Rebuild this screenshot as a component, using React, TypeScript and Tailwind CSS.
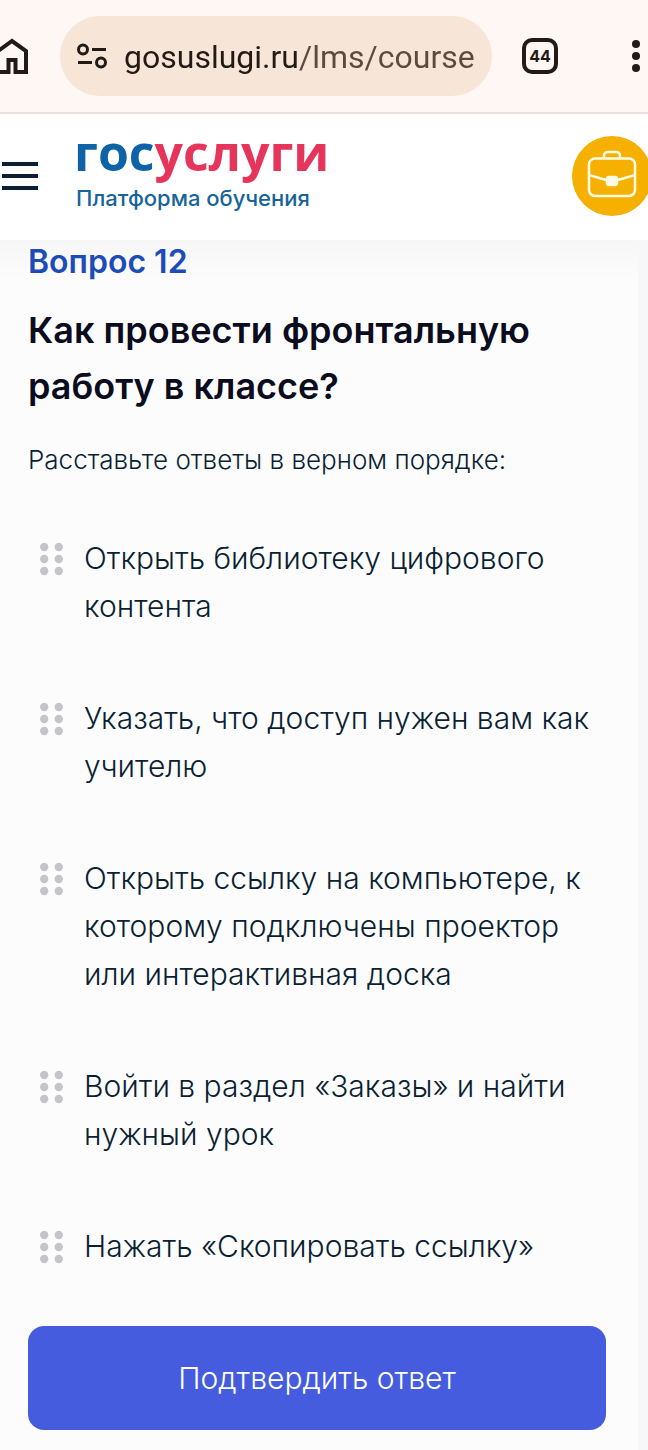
const answers = [
  "Открыть библиотеку цифрового контента",
  "Указать, что доступ нужен вам как учителю",
  "Открыть ссылку на компьютере, к которому подключены проектор или интерактивная доска",
  "Войти в раздел «Заказы» и найти нужный урок",
  "Нажать «Скопировать ссылку»",
];

export default function App() {
  return (
    <div className="min-h-screen overflow-x-hidden bg-[#f7f7f9] font-['Inter',sans-serif]">
      <BrowserBar />
      <SiteHeader />
      <main className="mr-2.5 bg-[#fcfcfc] bg-linear-to-b from-[#f6f6f6] to-[#fcfcfc] to-[40px] pb-5 pl-7 pr-8 pt-0.5">
        <h2 className="text-[32px] font-semibold leading-10 text-[#1d4cb8]">Вопрос 12</h2>
        <h1 className="mt-5 text-[36px] font-semibold leading-14 text-[#0b0c1e]">
          Как провести фронтальную работу в классе?
        </h1>
        <p className="mt-6 text-[26px] font-light leading-11 text-[#0b1f33]">
          Расставьте ответы в верном порядке:
        </p>
        <ol className="mt-13 flex flex-col gap-16">
          {answers.map((text) => (
            <Answer key={text} text={text} />
          ))}
        </ol>
        <button
          type="button"
          className="mt-14 h-26 w-full rounded-2xl bg-[#445cdd] text-[30px] font-light text-white"
        >
          Подтвердить ответ
        </button>
      </main>
    </div>
  );
}

function BrowserBar() {
  return (
    <div className="flex h-[114px] items-center border-b-2 border-[#ecdfdb] bg-[#fff7f4] text-[#231a15]">
      <button type="button" aria-label="Домой" className="w-7 shrink-0">
        <svg viewBox="0 0 28 36" className="h-9 w-7" fill="none" stroke="currentColor" strokeWidth="4">
          <path d="M-4 14.500 12 3 26 13V34H15.500V22H8.500V34H-3V14" />
        </svg>
      </button>
      <div className="ml-8 flex h-20 min-w-0 flex-1 items-center rounded-full bg-[#f7e5d8] pl-4 pr-4">
        <svg viewBox="0 0 32 28" className="h-7 w-8 shrink-0" fill="none" stroke="currentColor" strokeWidth="3">
          <circle cx="7" cy="7.500" r="4.500" />
          <path d="M16 7.500h14M2 20.500h14" />
          <circle cx="25" cy="20.500" r="4.500" />
        </svg>
        <input
          type="text"
          aria-label="Адрес страницы"
          defaultValue="gosuslugi.ru/lms/courses"
          className="ml-4 h-13 min-w-0 flex-1 bg-linear-to-r from-[#231a15] from-[176px] to-[#5c4a40] to-[176px] bg-clip-text pt-0.5 font-['Roboto',sans-serif] text-[32px] text-transparent outline-none"
        />
      </div>
      <button
        type="button"
        aria-label="Вкладки"
        className="ml-[30px] flex size-9 shrink-0 items-center justify-center rounded-[10px] border-4 border-current text-base font-bold"
      >
        44
      </button>
      <button type="button" aria-label="Меню" className="ml-[72px] w-[18px] shrink-0">
        <svg viewBox="0 0 18 36" className="h-9 w-[18px]" fill="currentColor">
          <circle cx="6" cy="6" r="4" />
          <circle cx="6" cy="18" r="4" />
          <circle cx="6" cy="30" r="4" />
        </svg>
      </button>
    </div>
  );
}

function SiteHeader() {
  return (
    <header className="flex h-[126px] items-center bg-white pb-0.5">
      <button type="button" aria-label="Открыть меню" className="ml-0.5 w-9 shrink-0">
        <svg viewBox="0 0 36 28" className="h-7 w-9" stroke="#0b1f33" strokeWidth="4">
          <path d="M0 2h36M0 14h36M0 26h36" />
        </svg>
      </button>
      <a href="#" className="ml-[38px] flex flex-col self-start pt-3.5">
        <span className="-ml-0.5 font-['Open_Sans',sans-serif] text-[50px] font-bold leading-12 text-[#0d62a8]">
          гос<span className="text-[#e6355a]">услуги</span>
        </span>
        <span className="mt-1.5 text-[22px] font-medium leading-8 text-[#17649a]">Платформа обучения</span>
      </a>
      <button
        type="button"
        aria-label="Портфель"
        className="-mr-1 ml-auto size-20 shrink-0 rounded-full bg-[#f5b000]"
      >
        <svg viewBox="0 0 80 80" className="size-20" fill="none" stroke="#fffbe6" strokeWidth="2.500">
          <rect x="17" y="22.500" width="46" height="37.500" rx="6" />
          <path d="M32 22v-2q0-4 4-4h8q4 0 4 4v2M17 39l17 5M63 39l-17 5" />
          <rect x="35" y="41" width="10" height="8" rx="2" fill="#fffbe6" />
        </svg>
      </button>
    </header>
  );
}

function Answer({ text }: { text: string }) {
  return (
    <li className="flex items-start pl-3">
      <svg viewBox="0 0 24 48" className="h-12 w-6 shrink-0" fill="#c5c4cc">
        <circle cx="4.200" cy="13" r="4.200" />
        <circle cx="18.800" cy="13" r="4.200" />
        <circle cx="4.200" cy="25" r="4.200" />
        <circle cx="18.800" cy="25" r="4.200" />
        <circle cx="4.200" cy="37" r="4.200" />
        <circle cx="18.800" cy="37" r="4.200" />
      </svg>
      <span className="ml-5 text-[30px] font-light leading-12 text-[#0b1f33]">{text}</span>
    </li>
  );
}
